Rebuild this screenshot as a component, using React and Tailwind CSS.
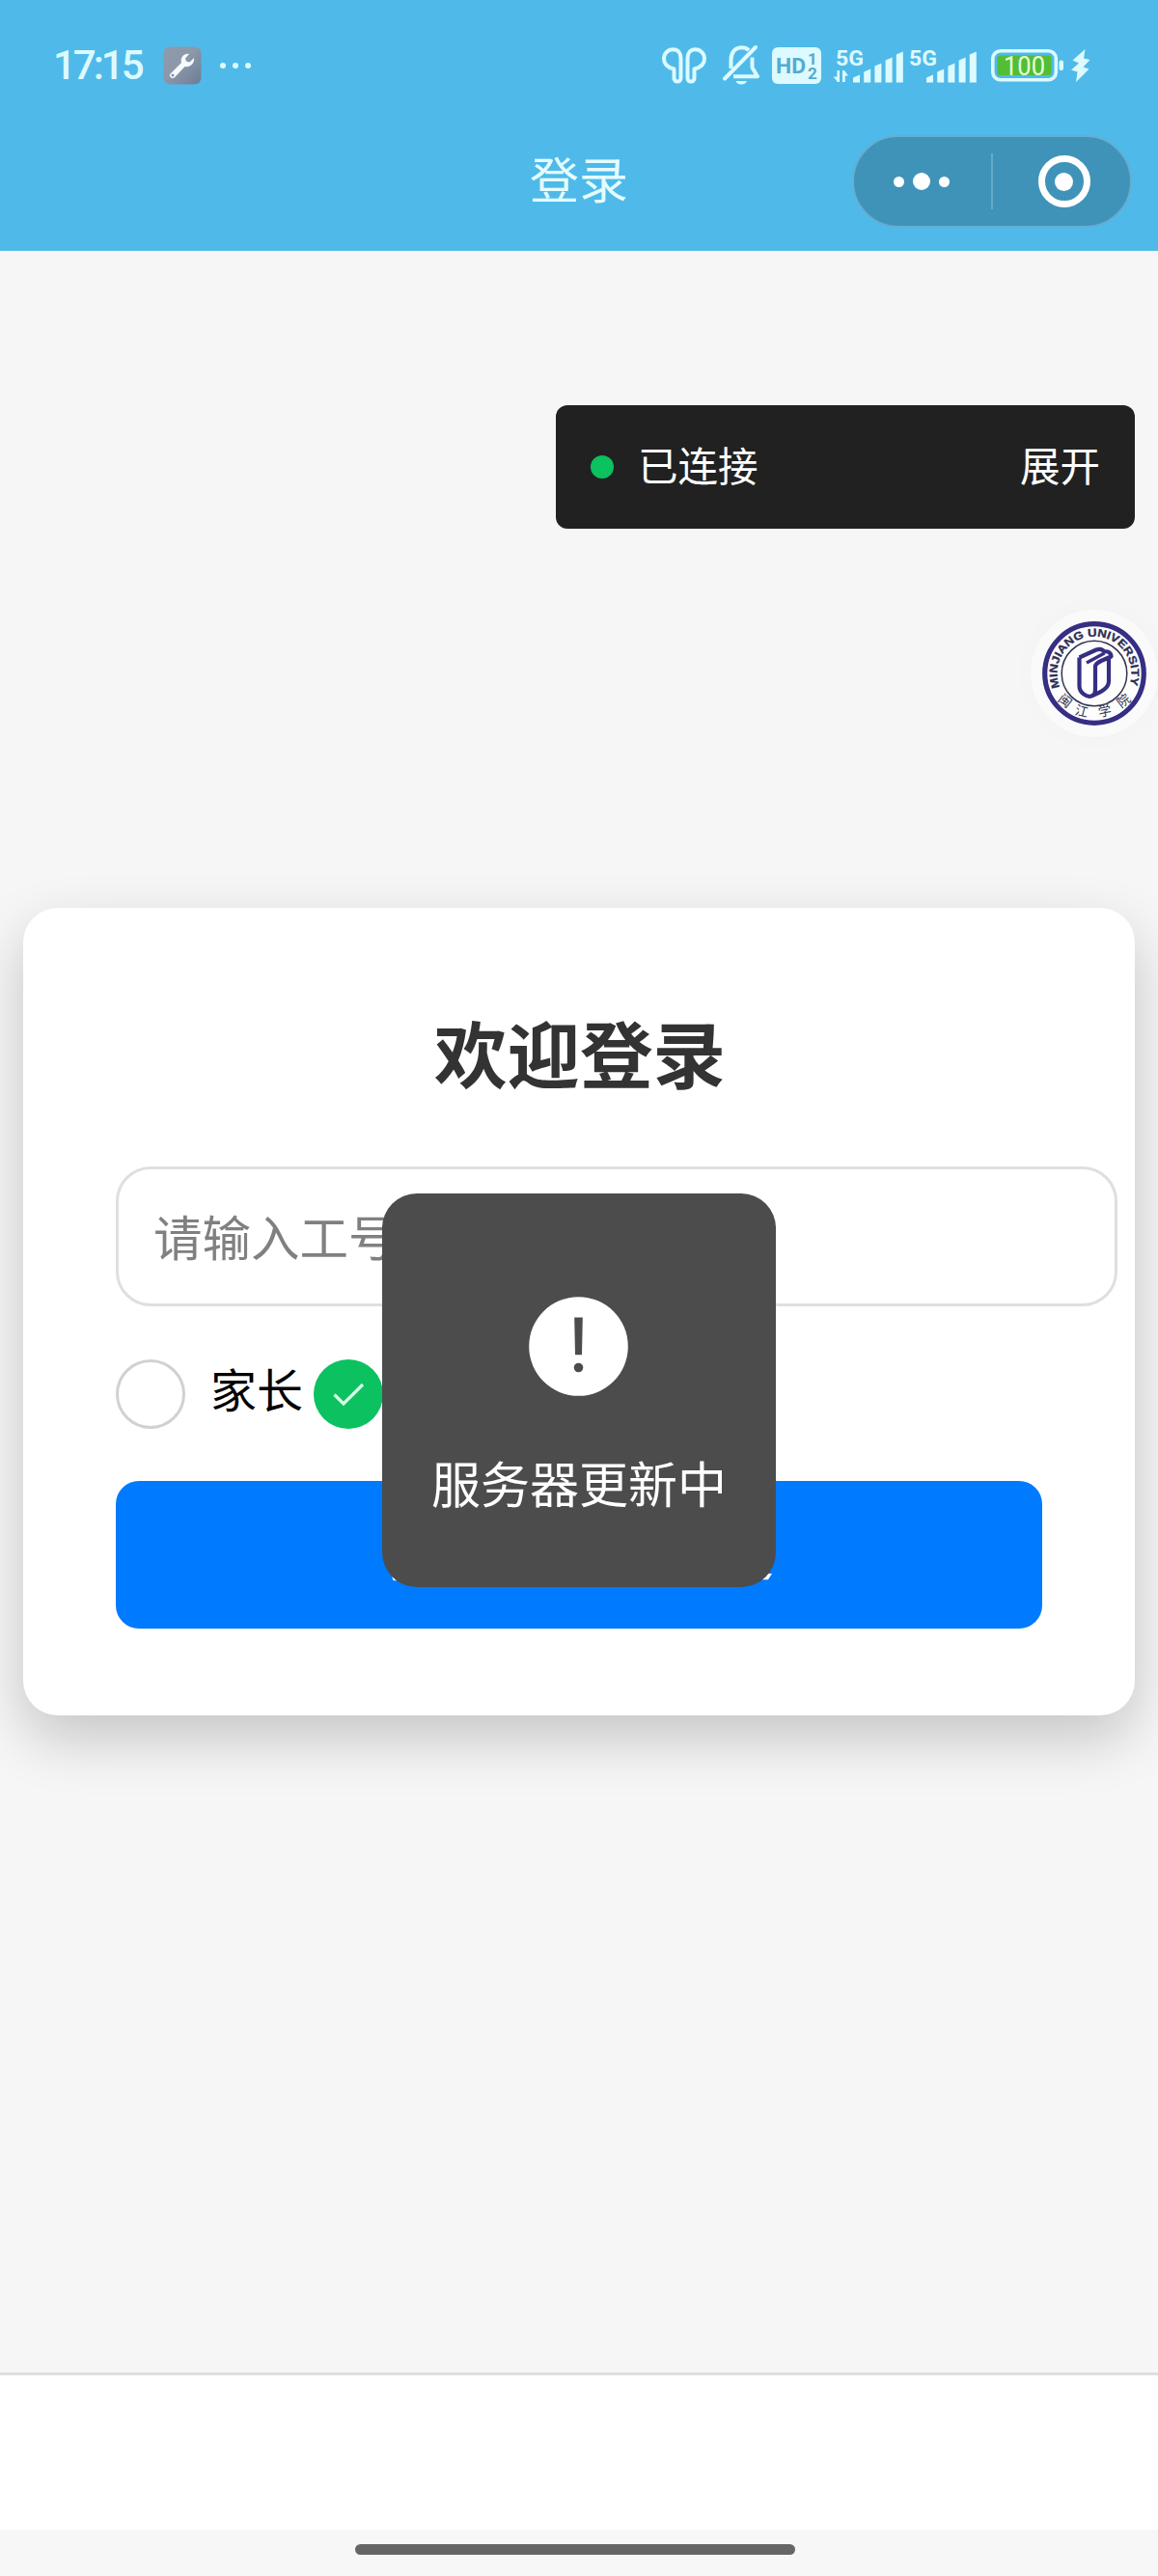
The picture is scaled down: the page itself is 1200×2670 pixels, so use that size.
import { useState } from 'react'

const INK = '#dcfaff'

function WrenchBadge() {
  return (
    <svg width="40" height="40" viewBox="0 0 40 40">
      <defs>
        <linearGradient id="badge" x1="0" y1="0" x2="1" y2="1">
          <stop offset="0" stopColor="#8b9bac" />
          <stop offset="0.45" stopColor="#8d98a9" />
          <stop offset="1" stopColor="#6c7c97" />
        </linearGradient>
      </defs>
      <rect x="0.5" y="0.5" width="39" height="39" rx="7" fill="url(#badge)" />
      <path
        d="M27 8 C22 7 17.500 11.500 19 17 L8 28 C6.500 29.500 6.500 31 8 32.200 C9.200 33.500 11 33.300 12.200 32 L22.500 21 C28 22 33 17.500 32 12 L27.500 16.500 L24 15.500 L23 12.500 Z"
        fill="#f6fbff"
      />
      <circle cx="10" cy="30" r="1.500" fill="#8490a2" />
    </svg>
  )
}

function EarbudsIcon() {
  const bud = 'M12.500 22.500 C6 21 2 17.500 2 11.800 C2 6 6.500 2.200 11.500 2.200 C16.500 2.200 19.500 6 19.500 11.500 V32 C19.500 36.800 12.500 36.800 12.500 32 Z'
  return (
    <svg width="46" height="38" viewBox="0 0 46 38" fill="none" stroke={INK} strokeWidth="4" strokeLinejoin="round">
      <path d={bud} />
      <path d={bud} transform="translate(46 0) scale(-1 1)" />
    </svg>
  )
}

function MutedBellIcon() {
  return (
    <svg width="39" height="42" viewBox="0 0 39 42" fill="none" stroke={INK} strokeWidth="4">
      <path d="M8.500 24 V15 C8.500 7 13 2.200 19.500 2.200 C22.500 2.200 25 3.200 27 5" />
      <path d="M30.500 12.500 V23 L36 32.200 H11" strokeLinejoin="round" />
      <path d="M2 34.500 L34 2" strokeLinecap="round" />
      <path d="M13.500 37 H25 C23.500 41.800 15 41.800 13.500 37 Z" fill={INK} stroke="none" />
    </svg>
  )
}

function HdIcon() {
  return (
    <svg width="51" height="38" viewBox="0 0 51 38" fontFamily="Roboto, sans-serif" fontWeight="700">
      <rect width="51" height="38" rx="6" fill={INK} />
      <g fill="#55aacf">
        <text x="4" y="26.500" fontSize="22" textLength="31" lengthAdjust="spacingAndGlyphs">HD</text>
        <text x="37" y="17.500" fontSize="17">1</text>
        <text x="37" y="33" fontSize="17">2</text>
      </g>
    </svg>
  )
}

function SignalIcon({ data }) {
  const bars = [8, 14, 20, 26, 32]
  return (
    <svg width="73" height="43" viewBox="0 -4 73 43" fill={INK}>
      <text x="3" y="16.500" fontSize="22" fontWeight="700" fontFamily="Roboto, sans-serif" textLength="29" lengthAdjust="spacingAndGlyphs">
        5G
      </text>
      {data && <path d="M4.500 22 H7 V34 H5 L0.500 28.500 H4.500 Z M10 22 H12 L16 27.500 H12.800 V34 H10 Z" />}
      {bars.map((h, i) => (
        <path key={h} d={`M${21 + i * 11.2} ${34.500} v${-h + 3} l7 -3 v${h} z`} />
      ))}
    </svg>
  )
}

function BatteryIcon() {
  return (
    <svg width="76" height="34" viewBox="0 0 76 34">
      <rect x="1.800" y="1.800" width="65.500" height="30" rx="8" fill="none" stroke={INK} strokeWidth="3.600" />
      <rect x="6.500" y="6.500" width="56" height="20.500" rx="3" fill="#53bd36" />
      <rect x="70.500" y="11.500" width="4.500" height="10.500" rx="2" fill={INK} />
      <text x="34.500" y="26.500" fontSize="27" textAnchor="middle" textLength="43" lengthAdjust="spacingAndGlyphs" fill="#e2ffd9" fontFamily="Roboto, sans-serif">
        100
      </text>
    </svg>
  )
}

function BoltIcon() {
  return (
    <svg width="20" height="34" viewBox="0 0 20 34" fill={INK}>
      <path d="M14.500 0 L1.500 11.500 L8 14.500 L0 21.500 L6.500 23.500 L5 34 L18.500 20.500 L12.500 18.500 L19.500 11 L13 9.500 Z" />
    </svg>
  )
}

function StatusBar() {
  return (
    <div className="flex h-[136px] items-center justify-between pl-[55px] pr-[70px]">
      <div className="flex items-center">
        <span className="w-[114px] font-[Roboto,sans-serif] text-[42px] font-medium leading-none tracking-[-3px] text-[#dcfaff]">
          17:15
        </span>
        <WrenchBadge />
        <div className="ml-[19px] flex gap-[7px]">
          <i className="size-[6px] rounded-full bg-[#dcfaff]" />
          <i className="size-[6px] rounded-full bg-[#dcfaff]" />
          <i className="size-[6px] rounded-full bg-[#dcfaff]" />
        </div>
      </div>
      <div className="flex items-center">
        <EarbudsIcon />
        <div className="ml-[17px]"><MutedBellIcon /></div>
        <div className="ml-[12px]"><HdIcon /></div>
        <div className="ml-[12px]"><SignalIcon data /></div>
        <div className="ml-[3px]"><SignalIcon /></div>
        <div className="ml-[15px]"><BatteryIcon /></div>
        <div className="ml-[7px]"><BoltIcon /></div>
      </div>
    </div>
  )
}

function Capsule() {
  return (
    <div className="flex h-[96px] w-[290px] items-center justify-self-end rounded-full border-2 border-[#64aed1] bg-[#3f93b9]">
      <div className="flex w-[142px] items-center justify-center gap-[9px] pr-[2px]">
        <i className="size-[11px] rounded-full bg-white" />
        <i className="size-[18px] rounded-full bg-white" />
        <i className="size-[11px] rounded-full bg-white" />
      </div>
      <div className="h-[58px] w-[2px] bg-[#63abca]" />
      <div className="flex flex-1 items-center justify-center pl-[5px]">
        <div className="flex size-[54px] items-center justify-center rounded-full border-[7px] border-white">
          <i className="size-[19px] rounded-full bg-white" />
        </div>
      </div>
    </div>
  )
}

function UniversityLogo() {
  return (
    <svg width="108" height="108" viewBox="-54 -54 108 108" fill="none">
      <circle r="54" fill="#fdfdfe" />
      <circle r="51.300" stroke="#352e83" strokeWidth="5.200" />
      <circle r="33.800" stroke="#33334f" strokeWidth="1.500" />
      <defs>
        <path id="ring" d="M-35.600 14.400 A38.400 38.400 0 1 1 35.600 14.400" />
      </defs>
      <text fontFamily="'Liberation Sans', Arial, sans-serif" fontWeight="700" fontSize="11.500" fill="#2d2d55" stroke="#2d2d55" strokeWidth="0.3">
        <textPath href="#ring" textLength="147" lengthAdjust="spacingAndGlyphs">MINJIANG UNIVERSITY</textPath>
      </text>
      <g fill="#33334f" fontFamily="'Noto Sans CJK SC', sans-serif" fontSize="13.500" textAnchor="middle">
        <text transform="translate(-30.500 28.500) rotate(38)" y="4.500">闽</text>
        <text transform="translate(-13 39.500) rotate(14)" y="4.500">江</text>
        <text transform="translate(11 39.500) rotate(-12)" y="4.500">学</text>
        <text transform="translate(30.500 28.500) rotate(-38)" y="4.500">院</text>
      </g>
      <g stroke="#352e83" strokeWidth="4.200" strokeLinejoin="round">
        <path d="M-15.500 -16.500 V13 C-15.500 20 -8 25 -3 23.500 C1 22 1 19 1 15 V-7 C1 -10 4 -11.500 7 -13 L15 -16.500 V8 C15 15 8 19 -3 23.500" />
        <path d="M-15.500 -16.500 L2 -24.500 C6 -26 9 -24.500 10.500 -22.500 C14 -23.500 17.500 -21 17.500 -17.500 L13 -15" />
        <path d="M-8 -11 L10.500 -21" strokeWidth="3.400" />
      </g>
    </svg>
  )
}

function DebugPanel() {
  return (
    <div className="absolute right-6 top-[420px] flex h-[128px] w-[600px] items-center rounded-xl bg-[#212121] px-9 text-[41.500px] text-white">
      <i className="mr-6 size-6 rounded-full bg-[#0bc160]" />
      <span className="pb-[5px] pl-px">已连接</span>
      <span className="ml-auto pb-[5px]">展开</span>
    </div>
  )
}

function Toast({ title }) {
  return (
    <div className="absolute left-[396px] top-[1237px] flex h-[408px] w-[408px] flex-col items-center rounded-[36px] bg-[#4c4c4c] pt-[107px]">
      <svg className="mr-px" width="103" height="103" viewBox="-51.500 -51.500 103 103">
        <circle r="51.300" fill="#fff" />
        <path d="M-4.300 -30 H4.300 L3.500 8.800 H-3.500 Z" fill="#4c4c4c" />
        <circle cy="22" r="4.800" fill="#4c4c4c" />
      </svg>
      <p className="mt-[51px] whitespace-nowrap text-[51px] leading-[76px] text-white">{title}</p>
    </div>
  )
}

function LoginCard() {
  const [role, setRole] = useState('staff')

  return (
    <div className="mx-6 h-[837px] rounded-[36px] bg-white px-24 pt-[92px] shadow-[0_24px_60px_rgba(0,0,0,0.2)]">
      <h1 className="pl-[2px] text-center text-[75.500px] font-bold leading-[112px] text-[#333]">欢迎登录</h1>
      <div className="mt-[64px] flex h-[145px] w-[1038px] items-center rounded-[36px] border-[3px] border-[#dfdfdf] px-9 pb-[2px] text-[50.500px] text-[#808080]">
        请输入工号
      </div>
      <div className="mt-[55px] flex h-[72px] items-center">
        <button
          className="size-[72px] rounded-full border-[3px] border-[#d1d1d1] bg-white"
          onClick={() => setRole('parent')}
        />
        <span className="-mt-[15px] ml-[26px] w-[107px] text-[48px] text-black">家长</span>
        <button
          className="flex size-[72px] items-center justify-center rounded-full bg-[#0bc160]"
          onClick={() => setRole('staff')}
        >
          {role === 'staff' && (
            <svg width="34" height="26" viewBox="0 0 34 26" fill="none" stroke="#d5ffe6" strokeWidth="3.200">
              <path d="M2.500 13.500 L12 23 L32 3" />
            </svg>
          )}
        </button>
      </div>
      {/* 按钮文字被提示框遮住，只露出两端笔画 */}
      <div className="mt-[54px] flex h-[153px] w-[960px] items-end justify-center rounded-3xl bg-[#007aff] pb-[48px]">
        <svg width="400" height="10" viewBox="0 0 400 10" fill="#fff">
          <path d="M6 4 L8 5 L11 8.500 L7.500 8 Z" />
          <path d="M389 3 L397 1 H400 L396 7.300 H390 Z" />
        </svg>
      </div>
    </div>
  )
}

export default function App() {
  return (
    <div className="relative flex h-[2670px] w-[1200px] flex-col overflow-hidden bg-[#f6f6f6] font-['Noto_Sans_CJK_SC',sans-serif]">
      <header className="h-[260px] bg-[#4fbae9]">
        <StatusBar />
        <div className="grid h-[104px] grid-cols-[1fr_auto_1fr] items-center pr-[27px]">
          <span />
          <span className="ml-[27px] pb-[7px] text-[51px] leading-none text-[#e4fcff]">登录</span>
          <Capsule />
        </div>
      </header>

      <main className="flex-1 pt-[681px]">
        <LoginCard />
      </main>

      <footer>
        <div className="h-[163px] border-t-[3px] border-[#dedede] bg-white" />
        <div className="flex h-[48px] justify-center bg-[#f7f7f7] pr-[8px] pt-[15px]">
          <div className="h-[11px] w-[456px] rounded-full bg-[#666]" />
        </div>
      </footer>

      <DebugPanel />
      <div className="absolute right-0 top-[632px] flex size-[132px] items-center justify-center rounded-full bg-[#fafafb] shadow-[0_0_30px_rgba(0,0,0,0.02)]">
        <UniversityLogo />
      </div>
      <Toast title="服务器更新中" />
    </div>
  )
}
